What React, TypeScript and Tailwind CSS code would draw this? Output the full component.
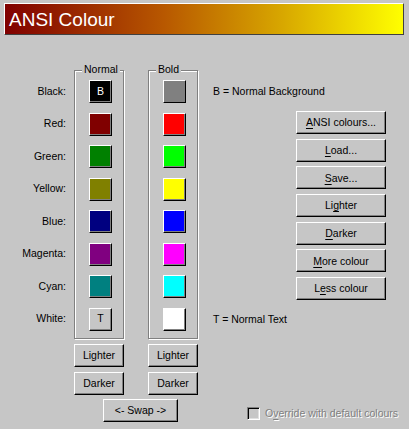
import React from 'react'

const normal = [
  { name: 'Black', color: '#000000', mark: 'B', markColor: 'text-white' },
  { name: 'Red', color: '#800000' },
  { name: 'Green', color: '#008000' },
  { name: 'Yellow', color: '#808000' },
  { name: 'Blue', color: '#000080' },
  { name: 'Magenta', color: '#800080' },
  { name: 'Cyan', color: '#008080' },
  { name: 'White', color: '#c6c6c6', mark: 'T', markColor: 'text-black' },
]

const bold = ['#808080', '#ff0000', '#00ff00', '#ffff00', '#0000ff', '#ff00ff', '#00ffff', '#ffffff']

const raised =
  'border border-t-white border-l-white border-r-black border-b-black shadow-[inset_-1px_-1px_0_#808080]'

function Button({ children, className = '' }: { children: React.ReactNode; className?: string }) {
  return (
    <button
      className={`${raised} h-[23px] bg-[#c6c6c6] flex items-center justify-center text-black leading-none ${className}`}
    >
      {children}
    </button>
  )
}

function Swatch({ color, mark, markColor }: { color: string; mark?: string; markColor?: string }) {
  return (
    <div
      className={`${raised} w-[23px] h-[23px] flex items-center justify-center ${markColor ?? ''}`}
      style={{ backgroundColor: color }}
    >
      {mark}
    </div>
  )
}

function Group({ title, children }: { title: string; children: React.ReactNode }) {
  return (
    <div className="relative w-[50px] h-[269px] border border-[#808080] shadow-[inset_1px_1px_0_#fff,1px_1px_0_#fff]">
      <span className="absolute -top-[8px] left-[7px] px-[2px] bg-[#c6c6c6] leading-[13px]">{title}</span>
      <div className="flex flex-col gap-[9.5px] pt-[9px] pl-[14px]">{children}</div>
    </div>
  )
}

function U({ children }: { children: React.ReactNode }) {
  return <span className="underline underline-offset-[2px]">{children}</span>
}

export default function App() {
  return (
    <div className="w-[409px] h-[429px] bg-[#c6c6c6] overflow-hidden font-['Liberation_Sans',Arial,sans-serif] text-[10.5px] text-black">
      <div className="ml-[4px] mt-[3px] w-[400px] h-[32px] border-t border-l border-t-white border-l-white border-r border-b border-r-[#404040] border-b-[#404040] bg-[linear-gradient(to_right,#800000,#b85800_40%,#d8a800_70%,#ffff00)] flex items-center pl-[4px]">
        <span className="text-white text-[19px] leading-none">ANSI Colour</span>
      </div>

      <div className="flex pt-[35px]">
        <div className="flex flex-col w-[198px]">
          <div className="flex">
            <div className="w-[66px] pt-[10px] flex flex-col gap-[9.5px]">
              {normal.map((c) => (
                <div key={c.name} className="h-[23px] flex items-center justify-end">
                  {c.name}:
                </div>
              ))}
            </div>
            <div className="ml-[8px]">
              <Group title="Normal">
                {normal.map((c) => (
                  <Swatch key={c.name} color={c.color} mark={c.mark} markColor={c.markColor} />
                ))}
              </Group>
            </div>
            <div className="ml-[24px]">
              <Group title="Bold">
                {bold.map((c) => (
                  <Swatch key={c} color={c} />
                ))}
              </Group>
            </div>
          </div>
          <div className="flex mt-[5px] pl-[74px] gap-[24px]">
            <Button className="w-[50px]">Lighter</Button>
            <Button className="w-[50px]">Lighter</Button>
          </div>
          <div className="flex mt-[5px] pl-[74px] gap-[24px]">
            <Button className="w-[50px]">Darker</Button>
            <Button className="w-[50px]">Darker</Button>
          </div>
          <div className="flex mt-[4px] pl-[103px]">
            <Button className="w-[75px]">&lt;- Swap -&gt;</Button>
          </div>
        </div>

        <div className="flex flex-col">
          <div className="mt-[10px] h-[23px] flex items-center pl-[15px]">B = Normal Background</div>
          <div className="mt-[8px] ml-[98px] flex flex-col gap-[4.67px]">
            <Button className="w-[90px]">
              <U>A</U>NSI colours...
            </Button>
            <Button className="w-[90px]">
              <U>L</U>oad...
            </Button>
            <Button className="w-[90px]">
              <U>S</U>ave...
            </Button>
            <Button className="w-[90px]">
              Li<U>g</U>hter
            </Button>
            <Button className="w-[90px]">
              <U>D</U>arker
            </Button>
            <Button className="w-[90px]">
              <U>M</U>ore colour
            </Button>
            <Button className="w-[90px]">
              L<U>e</U>ss colour
            </Button>
          </div>
          <div className="mt-[8px] h-[23px] flex items-center pl-[15px]">T = Normal Text</div>
          <div className="mt-[76px] ml-[49px] flex items-center gap-[5px]">
            <div className="w-[13px] h-[13px] border border-t-[#808080] border-l-[#808080] border-r-white border-b-white shadow-[inset_1px_1px_0_#000,inset_-1px_-1px_0_#dfdfdf]" />
            <span className="text-[#808080] [text-shadow:1px_1px_0_#fff] leading-[13px]">
              O<U>v</U>erride with default colours
            </span>
          </div>
        </div>
      </div>
    </div>
  )
}
